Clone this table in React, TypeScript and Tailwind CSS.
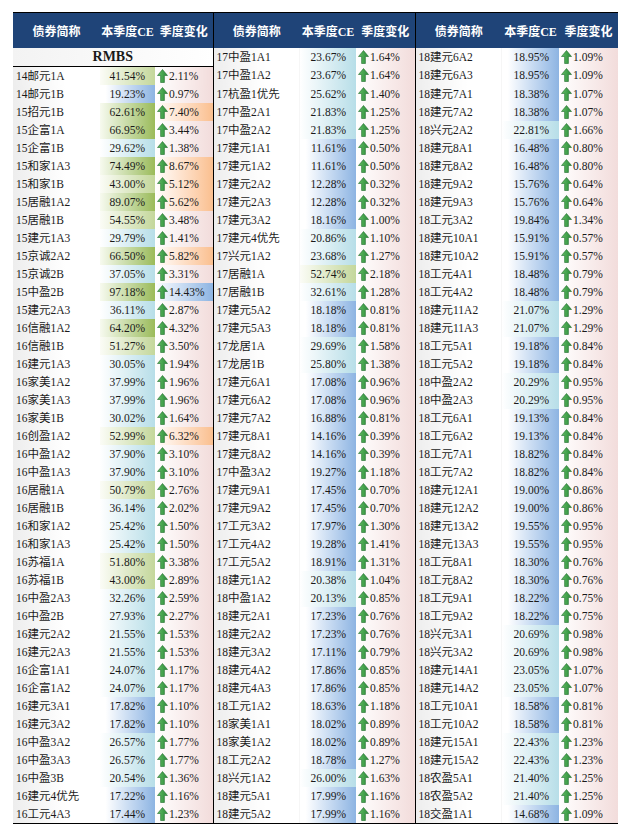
import React from "react";

type Row = [string, number, number];

const groupOne: Row[] = [
  ["14邮元1A", 41.54, 2.11],
  ["14邮元1B", 19.23, 0.97],
  ["15招元1B", 62.61, 7.4],
  ["15企富1A", 66.95, 3.44],
  ["15企富1B", 29.62, 1.38],
  ["15和家1A3", 74.49, 8.67],
  ["15和家1B", 43.0, 5.12],
  ["15居融1A2", 89.07, 5.62],
  ["15居融1B", 54.55, 3.48],
  ["15建元1A3", 29.79, 1.41],
  ["15京诚2A2", 66.5, 5.82],
  ["15京诚2B", 37.05, 3.31],
  ["15中盈2B", 97.18, 14.43],
  ["15建元2A3", 36.11, 2.87],
  ["16信融1A2", 64.2, 4.32],
  ["16信融1B", 51.27, 3.5],
  ["16建元1A3", 30.05, 1.94],
  ["16家美1A2", 37.99, 1.96],
  ["16家美1A3", 37.99, 1.96],
  ["16家美1B", 30.02, 1.64],
  ["16创盈1A2", 52.99, 6.32],
  ["16中盈1A2", 37.9, 3.1],
  ["16中盈1A3", 37.9, 3.1],
  ["16居融1A", 50.79, 2.76],
  ["16居融1B", 36.14, 2.02],
  ["16和家1A2", 25.42, 1.5],
  ["16和家1A3", 25.42, 1.5],
  ["16苏福1A", 51.8, 3.38],
  ["16苏福1B", 43.0, 2.89],
  ["16中盈2A3", 32.26, 2.59],
  ["16中盈2B", 27.93, 2.27],
  ["16建元2A2", 21.55, 1.53],
  ["16建元2A3", 21.55, 1.53],
  ["16企富1A1", 24.07, 1.17],
  ["16企富1A2", 24.07, 1.17],
  ["16建元3A1", 17.82, 1.1],
  ["16建元3A2", 17.82, 1.1],
  ["16中盈3A2", 26.57, 1.77],
  ["16中盈3A3", 26.57, 1.77],
  ["16中盈3B", 20.54, 1.36],
  ["16建元4优先", 17.22, 1.16],
  ["16工元4A3", 17.44, 1.23],
];

const groupTwo: Row[] = [
  ["17中盈1A1", 23.67, 1.64],
  ["17中盈1A2", 23.67, 1.64],
  ["17杭盈1优先", 25.62, 1.4],
  ["17中盈2A1", 21.83, 1.25],
  ["17中盈2A2", 21.83, 1.25],
  ["17建元1A1", 11.61, 0.5],
  ["17建元1A2", 11.61, 0.5],
  ["17建元2A2", 12.28, 0.32],
  ["17建元2A3", 12.28, 0.32],
  ["17建元3A2", 18.16, 1.0],
  ["17建元4优先", 20.86, 1.1],
  ["17兴元1A2", 23.68, 1.27],
  ["17居融1A", 52.74, 2.18],
  ["17居融1B", 32.61, 1.28],
  ["17建元5A2", 18.18, 0.81],
  ["17建元5A3", 18.18, 0.81],
  ["17龙居1A", 29.69, 1.58],
  ["17龙居1B", 25.8, 1.38],
  ["17建元6A1", 17.08, 0.96],
  ["17建元6A2", 17.08, 0.96],
  ["17建元7A2", 16.88, 0.81],
  ["17建元8A1", 14.16, 0.39],
  ["17建元8A2", 14.16, 0.39],
  ["17中盈3A2", 19.27, 1.18],
  ["17建元9A1", 17.45, 0.7],
  ["17建元9A2", 17.45, 0.7],
  ["17工元3A2", 17.97, 1.3],
  ["17工元4A2", 19.28, 1.41],
  ["17工元5A2", 18.91, 1.31],
  ["18建元1A2", 20.38, 1.04],
  ["18中盈1A2", 20.13, 0.85],
  ["18建元2A1", 17.23, 0.76],
  ["18建元2A2", 17.23, 0.76],
  ["18建元3A2", 17.11, 0.79],
  ["18建元4A2", 17.86, 0.85],
  ["18建元4A3", 17.86, 0.85],
  ["18工元1A2", 18.63, 1.18],
  ["18家美1A1", 18.02, 0.89],
  ["18家美1A2", 18.02, 0.89],
  ["18工元2A2", 18.78, 1.27],
  ["18兴元1A2", 26.0, 1.63],
  ["18建元5A1", 17.99, 1.16],
  ["18建元5A2", 17.99, 1.16],
];

const groupThree: Row[] = [
  ["18建元6A2", 18.95, 1.09],
  ["18建元6A3", 18.95, 1.09],
  ["18建元7A1", 18.38, 1.07],
  ["18建元7A2", 18.38, 1.07],
  ["18兴元2A2", 22.81, 1.66],
  ["18建元8A1", 16.48, 0.8],
  ["18建元8A2", 16.48, 0.8],
  ["18建元9A2", 15.76, 0.64],
  ["18建元9A3", 15.76, 0.64],
  ["18工元3A2", 19.84, 1.34],
  ["18建元10A1", 15.91, 0.57],
  ["18建元10A2", 15.91, 0.57],
  ["18工元4A1", 18.48, 0.79],
  ["18工元4A2", 18.48, 0.79],
  ["18建元11A2", 21.07, 1.29],
  ["18建元11A3", 21.07, 1.29],
  ["18工元5A1", 19.18, 0.84],
  ["18工元5A2", 19.18, 0.84],
  ["18中盈2A2", 20.29, 0.95],
  ["18中盈2A3", 20.29, 0.95],
  ["18工元6A1", 19.13, 0.84],
  ["18工元6A2", 19.13, 0.84],
  ["18工元7A1", 18.82, 0.84],
  ["18工元7A2", 18.82, 0.84],
  ["18建元12A1", 19.0, 0.86],
  ["18建元12A2", 19.0, 0.86],
  ["18建元13A2", 19.55, 0.95],
  ["18建元13A3", 19.55, 0.95],
  ["18工元8A1", 18.3, 0.76],
  ["18工元8A2", 18.3, 0.76],
  ["18工元9A1", 18.22, 0.75],
  ["18工元9A2", 18.22, 0.75],
  ["18兴元3A1", 20.69, 0.98],
  ["18兴元3A2", 20.69, 0.98],
  ["18建元14A1", 23.05, 1.07],
  ["18建元14A2", 23.05, 1.07],
  ["18工元10A1", 18.58, 0.81],
  ["18工元10A2", 18.58, 0.81],
  ["18建元15A1", 22.43, 1.23],
  ["18建元15A2", 22.43, 1.23],
  ["18农盈5A1", 21.4, 1.25],
  ["18农盈5A2", 21.4, 1.25],
  ["18交盈1A1", 14.68, 1.09],
];

// colour scale on the CE column
function ceFill(v: number) {
  if (v >= 60) return "bg-linear-to-r from-[#f7faef] to-[#9bbb59]";
  if (v >= 40) return "bg-linear-to-r from-[#fbfcf6] to-[#c4d79b]";
  if (v >= 20) return "bg-linear-to-r from-white to-[#b7dee8]";
  return "bg-linear-to-r from-white from-10% to-[#8db4e2]";
}

function chgFill(v: number) {
  if (v >= 10) return "bg-linear-to-r from-white to-[#8db4e2]";
  if (v >= 5) return "bg-linear-to-r from-white to-[#fabf8f]";
  return "bg-linear-to-r from-white to-[#f2dcdb]";
}

function UpArrow() {
  return (
    <svg width="11" height="14" viewBox="0 0 11 14" className="shrink-0" aria-hidden="true">
      <defs>
        <linearGradient id="arr" x1="0" x2="1" y1="0" y2="0">
          <stop offset="0" stopColor="#62bd62" />
          <stop offset="1" stopColor="#2a8a3a" />
        </linearGradient>
      </defs>
      <polygon
        points="5.5,0.5 10.5,6.5 7.4,6.5 7.4,13.5 3.6,13.5 3.6,6.5 0.5,6.5"
        fill="url(#arr)"
        stroke="#1f6b2b"
        strokeWidth="0.6"
        strokeLinejoin="round"
      />
    </svg>
  );
}

const pct = (v: number) => `${v.toFixed(2)}%`;

function Cells({ row, left, right }: { row: Row; left?: boolean; right?: boolean }) {
  const [name, ce, chg] = row;
  return (
    <>
      <td
        className={`bg-linear-to-r from-[#ededed] to-white to-60% pl-[3px] whitespace-nowrap ${
          left ? "border-l border-black" : ""
        }`}
      >
        {name}
      </td>
      <td className={`pr-[10px] text-right ${ceFill(ce)}`}>{pct(ce)}</td>
      <td className={`${chgFill(chg)} ${right ? "border-r border-black" : ""}`}>
        <div className="flex items-center gap-[1px] pl-[2px]">
          <UpArrow />
          <span>{pct(chg)}</span>
        </div>
      </td>
    </>
  );
}

function HeaderCells({ left, right }: { left?: boolean; right?: boolean }) {
  return (
    <>
      <th className={`pt-[3px] font-bold ${left ? "border-l border-black" : ""}`}>债券简称</th>
      <th className="pt-[3px] font-bold">本季度CE</th>
      <th className={`pt-[3px] font-bold ${right ? "border-r border-black" : ""}`}>季度变化</th>
    </>
  );
}

export default function App() {
  const rows = Array.from({ length: 43 }, (_, i) => i);
  return (
    <div className="min-h-[837px] w-[631px] bg-white pt-[12px] pl-[13px] font-['Liberation_Serif','Noto_Sans_CJK_SC',serif] text-[11.5px] text-[#1a1a1a]">
      <table className="w-[605px] table-fixed border-collapse border-t border-b border-black">
        <colgroup>
          <col className="w-[87px]" />
          <col className="w-[55px]" />
          <col className="w-[58px]" />
          <col className="w-[87px]" />
          <col className="w-[56px]" />
          <col className="w-[59px]" />
          <col className="w-[87px]" />
          <col className="w-[57px]" />
          <col className="w-[59px]" />
        </colgroup>
        <thead>
          <tr className="h-[35px] bg-[#1f4478] text-[12px] text-white">
            <HeaderCells />
            <HeaderCells left right />
            <HeaderCells />
          </tr>
        </thead>
        <tbody>
          {rows.map((i) => (
            <tr key={i} className="h-[18px] leading-[18px]">
              {i === 0 ? (
                <td
                  colSpan={3}
                  className="border-b border-black bg-linear-to-r from-[#f3f3f3] to-white text-center text-[14px] font-bold"
                >
                  RMBS
                </td>
              ) : (
                <Cells row={groupOne[i - 1]} />
              )}
              <Cells row={groupTwo[i]} left right />
              <Cells row={groupThree[i]} />
            </tr>
          ))}
        </tbody>
      </table>
    </div>
  );
}
